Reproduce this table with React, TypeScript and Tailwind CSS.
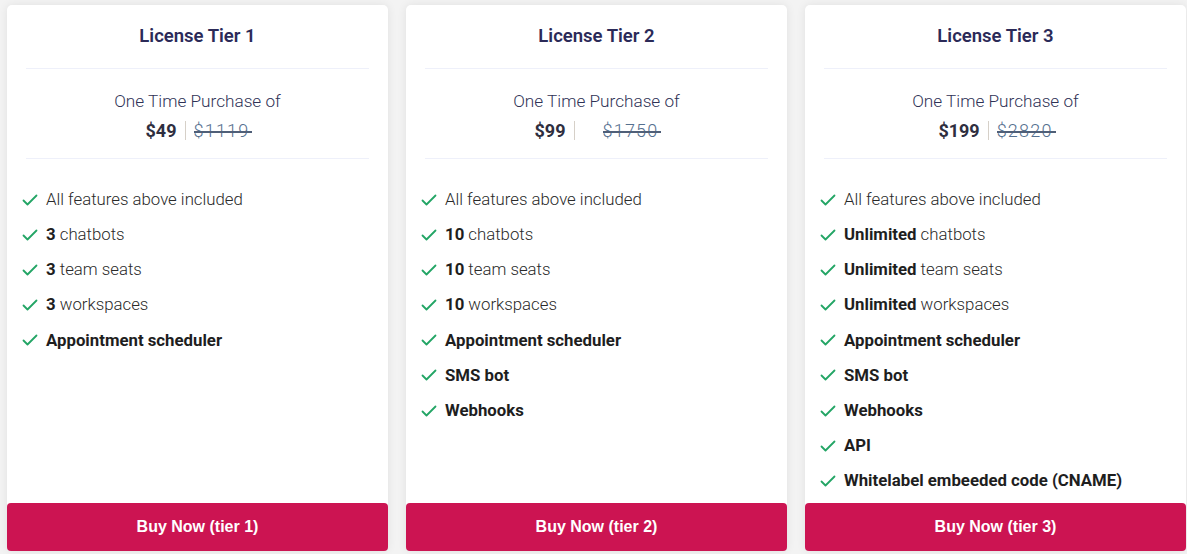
import React from "react"

type Feature = { bold?: string; rest?: string }

const tiers: {
  n: number
  price: string
  old: string
  wideGap?: boolean
  features: Feature[]
}[] = [
  {
    n: 1,
    price: "$49",
    old: "$1119",
    features: [
      { rest: "All features above included" },
      { bold: "3", rest: " chatbots" },
      { bold: "3", rest: " team seats" },
      { bold: "3", rest: " workspaces" },
      { bold: "Appointment scheduler" },
    ],
  },
  {
    n: 2,
    price: "$99",
    old: "$1750",
    wideGap: true,
    features: [
      { rest: "All features above included" },
      { bold: "10", rest: " chatbots" },
      { bold: "10", rest: " team seats" },
      { bold: "10", rest: " workspaces" },
      { bold: "Appointment scheduler" },
      { bold: "SMS bot" },
      { bold: "Webhooks" },
    ],
  },
  {
    n: 3,
    price: "$199",
    old: "$2820",
    features: [
      { rest: "All features above included" },
      { bold: "Unlimited", rest: " chatbots" },
      { bold: "Unlimited", rest: " team seats" },
      { bold: "Unlimited", rest: " workspaces" },
      { bold: "Appointment scheduler" },
      { bold: "SMS bot" },
      { bold: "Webhooks" },
      { bold: "API" },
      { bold: "Whitelabel embeeded code (CNAME)" },
    ],
  },
]

function Check() {
  return (
    <svg width="16" height="16" viewBox="0 0 16 16" fill="none" className="shrink-0">
      <path d="M1.5 8.5 L5.5 12.5 L14.5 3.5" stroke="#23a565" strokeWidth="1.8" strokeLinecap="round" strokeLinejoin="round" />
    </svg>
  )
}

function TierCard({ tier }: { tier: (typeof tiers)[number] }) {
  return (
    <div className="flex h-[546px] w-[381px] shrink-0 flex-col rounded-[5px] bg-white shadow-[0_0_10px_rgba(0,0,0,0.08)]">
      <div className="px-[19px]">
        <div className="h-[63px] pt-[17px] text-center text-[18.5px] font-semibold leading-[28px] text-[#2b2a58]">
          License Tier {tier.n}
        </div>
        <div className="h-px bg-[#eef0fa]" />
        <div className="flex h-[89px] flex-col items-center pt-[18px]">
          <div className="text-[17.2px] font-light leading-[29px] text-[#2f3256]">One Time Purchase of</div>
          <div className="flex items-center text-[18px] leading-[29px]">
            <span className="font-bold text-[#2f2f3f]">{tier.price}</span>
            <span className="mx-[8px] h-[19px] w-px bg-[#d6d0c8]" />
            <span className={`relative font-light tracking-[1.2px] text-[#55708f] ${tier.wideGap ? "ml-[20px]" : ""}`}>
              {tier.old}
              <span className="absolute left-0 right-[-3px] top-[15px] h-[1.5px] bg-[#4f5f78]" />
            </span>
          </div>
        </div>
        <div className="h-px bg-[#eef0fa]" />
      </div>
      <ul className="flex flex-col gap-[14.2px] pl-[15px] pt-[30px]">
        {tier.features.map((f, i) => (
          <li key={i} className="flex h-[21px] items-center gap-[8px] text-[16.8px] text-[#2a2a2a]">
            <Check />
            <span className="whitespace-nowrap">
              {f.bold && <b className="font-bold text-[#1e1e1e]">{f.bold}</b>}
              <span className="font-light">{f.rest}</span>
            </span>
          </li>
        ))}
      </ul>
      <button className="mt-auto h-[48px] w-full rounded-[4px] bg-[#cc1452] font-['Liberation_Sans',Arial,sans-serif] text-[16px] font-bold text-white">
        Buy Now (tier {tier.n})
      </button>
    </div>
  )
}

export default function App() {
  return (
    <div className="flex h-[554px] w-[1187px] gap-[18px] overflow-hidden bg-[#f3f3f3] pl-[7px] pt-[5px] font-['Roboto','Noto_Sans',sans-serif]">
      {tiers.map((t) => (
        <TierCard key={t.n} tier={t} />
      ))}
    </div>
  )
}
